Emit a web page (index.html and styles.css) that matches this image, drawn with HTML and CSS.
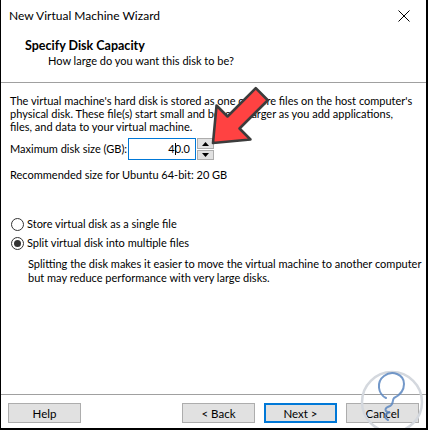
FILE: index.html
```html
<!DOCTYPE html>
<html lang="en">
<head>
    <meta charset="UTF-8">
    <title>New Virtual Machine Wizard</title>
    <link rel="stylesheet" href="styles.css">
</head>
<body>
    <div class="window">
        <div class="titlebar">
            <span class="title">New Virtual Machine Wizard</span>
            <span class="close">
                <svg width="12" height="12" viewBox="0 0 12 12"><path d="M0.5 0.5 L11.5 11.5 M11.5 0.5 L0.5 11.5" stroke="#000" stroke-width="1"/></svg>
            </span>
        </div>

        <div class="header">
            <h1>Specify Disk Capacity</h1>
            <p>How large do you want this disk to be?</p>
        </div>

        <div class="content">
            <p class="intro">The virtual machine's hard disk is stored as one or more files on the host computer's<br>physical disk. These file(s) start small and become larger as you add applications,<br>files, and data to your virtual machine.</p>

            <div class="size-row">
                <label>Maximum disk size (GB):</label>
                <div class="spin-input"><span class="value">4<i class="caret"></i>0.0</span></div>
                <div class="spin">
                    <span class="spin-btn"><svg width="7" height="4" viewBox="0 0 7 4"><path d="M0 4 L3.5 0 L7 4 Z" fill="#000"/></svg></span>
                    <span class="spin-btn"><svg width="7" height="4" viewBox="0 0 7 4"><path d="M0 0 L3.5 4 L7 0 Z" fill="#000"/></svg></span>
                </div>
            </div>

            <p class="recommended">Recommended size for Ubuntu 64-bit: 20 GB</p>

            <div class="options">
                <div class="radio-row"><span class="radio"></span>Store virtual disk as a single file</div>
                <div class="radio-row"><span class="radio checked"></span>Split virtual disk into multiple files</div>
                <p class="note">Splitting the disk makes it easier to move the virtual machine to another computer<br>but may reduce performance with very large disks.</p>
            </div>
        </div>

        <div class="footer">
            <button class="btn">Help</button>
            <div class="nav">
                <button class="btn">&lt; Back</button>
                <button class="btn default">Next &gt;</button>
                <button class="btn">Cancel</button>
            </div>
        </div>

        <!-- watermark -->
        <svg class="watermark" width="70" height="62" viewBox="0 0 70 62">
            <circle cx="38" cy="36" r="30" fill="none" stroke="#d4d8de" stroke-width="2.5"/>
            <path d="M32 32 C24 28 22 16 30 10 C38 4 50 8 50 18 C50 26 44 30 40 32 C38 34 40 38 36 40 C30 42 30 46 36 46 C30 48 30 52 34 54" fill="none" stroke="#5b86c0" stroke-width="2" stroke-linecap="round" opacity="0.85"/>
        </svg>

        <!-- red pointer arrow -->
        <svg class="pointer" width="428" height="430" viewBox="0 0 428 430">
            <polygon points="0,0 -29,-24 -29,-8.5 -69,-8.5 -69,8.5 -29,8.5 -29,24" transform="translate(213 143) rotate(135)" fill="#ff4242" stroke="#3c3c3c" stroke-width="2.6" stroke-linejoin="round"/>
        </svg>
    </div>
</body>
</html>
```

FILE: styles.css
```css
* {
    margin: 0;
    padding: 0;
    box-sizing: border-box;
}

body {
    font-family: Lato, "Noto Sans", sans-serif;
    font-size: 11px;
    color: #000;
    background: #fff;
    width: 428px;
    height: 430px;
    overflow: hidden;
    white-space: nowrap;
}

.window {
    position: relative;
    width: 428px;
    height: 430px;
    background: #fff;
    border-left: 1px solid #000;
    border-right: 2px solid #000;
    border-bottom: 2px solid #000;
    display: flex;
    flex-direction: column;
}

.titlebar {
    height: 31px;
    display: flex;
    align-items: center;
    justify-content: space-between;
    padding-left: 8px;
    font-size: 12px;
}

.close {
    width: 40px;
    display: flex;
    justify-content: center;
    padding-right: 4px;
}

.header {
    height: 52px;
    padding: 7px 0 0 24px;
    border-bottom: 1px solid #a0a0a0;
    line-height: 15px;
}

.header h1 {
    font-size: 12.5px;
    font-weight: bold;
}

.header p {
    padding-left: 23px;
}

.content {
    padding: 12px 0 0 9px;
    line-height: 12.8px;
}

.size-row {
    display: flex;
    align-items: center;
    margin-top: 5px;
    height: 22px;
}

.size-row label {
    width: 118px;
}

.spin-input {
    width: 68px;
    height: 22px;
    border: 1px solid #0078d7;
    display: flex;
    align-items: center;
    justify-content: flex-end;
    padding-right: 5px;
}

.value {
    position: relative;
}

.caret {
    display: inline-block;
    width: 1px;
    height: 12px;
    background: #000;
    vertical-align: -2px;
    margin: 0 -1px 0 0;
}

.spin {
    display: flex;
    flex-direction: column;
    gap: 1px;
    margin-left: 1px;
}

.spin-btn {
    width: 17px;
    height: 10.5px;
    border: 1px solid #adadad;
    background: #e1e1e1;
    display: flex;
    align-items: center;
    justify-content: center;
}

.recommended {
    margin-top: 9px;
}

.options {
    margin-top: 34px;
}

.radio-row {
    display: flex;
    align-items: center;
    height: 16px;
    margin-bottom: 3px;
}

.radio {
    width: 13px;
    height: 13px;
    border: 1px solid #333;
    border-radius: 50%;
    margin: 0 3px 0 1px;
    display: flex;
    align-items: center;
    justify-content: center;
}

.radio.checked::after {
    content: "";
    width: 7px;
    height: 7px;
    border-radius: 50%;
    background: #333;
}

.note {
    padding-left: 18px;
    margin-top: 6px;
    line-height: 14px;
}

.footer {
    margin-top: auto;
    border-top: 1px solid #a0a0a0;
    padding: 8px 7px 5px 7px;
    display: flex;
    justify-content: space-between;
}

.nav {
    display: flex;
    gap: 9px;
}

.btn {
    width: 73px;
    height: 20px;
    background: #e1e1e1;
    border: 1px solid #adadad;
    font-family: Lato, "Noto Sans", sans-serif;
    font-size: 11.5px;
    color: #000;
}

.btn.default {
    border: 2px solid #0078d7;
}

.watermark {
    position: absolute;
    right: 2px;
    bottom: 0;
}

.pointer {
    position: absolute;
    left: -1px;
    top: 0;
    pointer-events: none;
}
```
